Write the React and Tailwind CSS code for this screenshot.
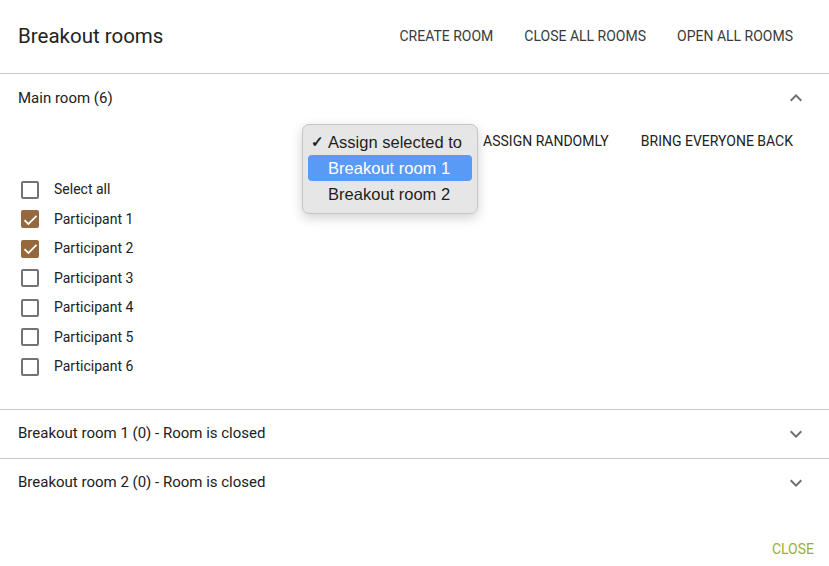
import React from 'react';

const participants = ['Participant 1', 'Participant 2', 'Participant 3', 'Participant 4', 'Participant 5', 'Participant 6'];
const checked = { 'Participant 1': true, 'Participant 2': true };

const Chevron = ({ up }) => (
  <svg viewBox="0 0 24 24" className={`w-6 h-6 fill-[#707070] ${up ? 'rotate-180' : ''}`}>
    <path d="M16.59 8.59L12 13.17 7.41 8.59 6 10l6 6 6-6z" />
  </svg>
);

const Checkbox = ({ on }) =>
  on ? (
    <span className="w-[18px] h-[18px] rounded-[2px] bg-[#95683d] flex items-center justify-center">
      <svg viewBox="0 0 24 24" className="w-[17px] h-[17px] fill-white">
        <path d="M9 16.6L4.4 12l-1.8 1.8L9 20.2 21.4 7.8 19.6 6z" />
      </svg>
    </span>
  ) : (
    <span className="w-[18px] h-[18px] rounded-[2px] border-2 border-[#737373] bg-white" />
  );

// accordion header row
const RoomRow = ({ label, open }) => (
  <div className="h-[48px] flex items-center justify-between pl-[18px] pr-[21px]">
    <span className="text-[15px] text-[#212121]">{label}</span>
    <Chevron up={open} />
  </div>
);

export default function App() {
  return (
    <div className="w-[829px] h-[566px] bg-white flex flex-col font-['Roboto',sans-serif] text-[#212121]">
      {/* title bar */}
      <div className="h-[74px] flex items-center justify-between pl-[18px] pr-[36px] border-b border-[#c9c9c9]">
        <h1 className="text-[20.5px] text-[#222]">Breakout rooms</h1>
        <div className="flex items-center gap-[31px] text-[14px] text-[#3a3a3a]">
          <span>CREATE ROOM</span>
          <span>CLOSE ALL ROOMS</span>
          <span>OPEN ALL ROOMS</span>
        </div>
      </div>

      {/* main room */}
      <div className="border-b border-[#c9c9c9]">
        <RoomRow label="Main room (6)" open />
        <div className="h-[38px] flex items-center justify-end pr-[36px] text-[14px] text-[#222]">
          <div className="relative w-[176px] h-full">
            <div className="absolute left-0 top-[2px] w-[176px] rounded-[7px] border border-[#c6c6c6] bg-[#e6e6e6] shadow-[0_4px_12px_rgba(0,0,0,0.18)] px-[5px] pt-[4px] pb-[6px] font-['Liberation_Sans',sans-serif] text-[16.5px] text-[#1e1e1e] z-10">
              <div className="h-[26px] flex items-center">
                <span className="w-[20px] pl-[3px] text-[15px] font-bold">✓</span>
                <span>Assign selected to</span>
              </div>
              <div className="h-[26px] flex items-center rounded-[4px] bg-[#5a9af7] text-white pl-[20px]">
                Breakout room 1
              </div>
              <div className="h-[26px] flex items-center pl-[20px]">Breakout room 2</div>
            </div>
          </div>
          <span className="ml-[5px]">ASSIGN RANDOMLY</span>
          <span className="ml-[32px]">BRING EVERYONE BACK</span>
        </div>
        <div className="pt-[15px] pb-[27px] pl-[21px] flex flex-col text-[14px]">
          <label className="h-[29.5px] flex items-center gap-[15px]">
            <Checkbox />
            <span>Select all</span>
          </label>
          {participants.map(p => (
            <label key={p} className="h-[29.5px] flex items-center gap-[15px]">
              <Checkbox on={checked[p]} />
              <span>{p}</span>
            </label>
          ))}
        </div>
      </div>

      <div className="border-b border-[#c9c9c9]">
        <RoomRow label="Breakout room 1 (0) - Room is closed" />
      </div>
      <RoomRow label="Breakout room 2 (0) - Room is closed" />

      <div className="flex-1 flex items-end justify-end pr-[15px] pb-[6px]">
        <span className="text-[14px] text-[#9db02e]">CLOSE</span>
      </div>
    </div>
  );
}
